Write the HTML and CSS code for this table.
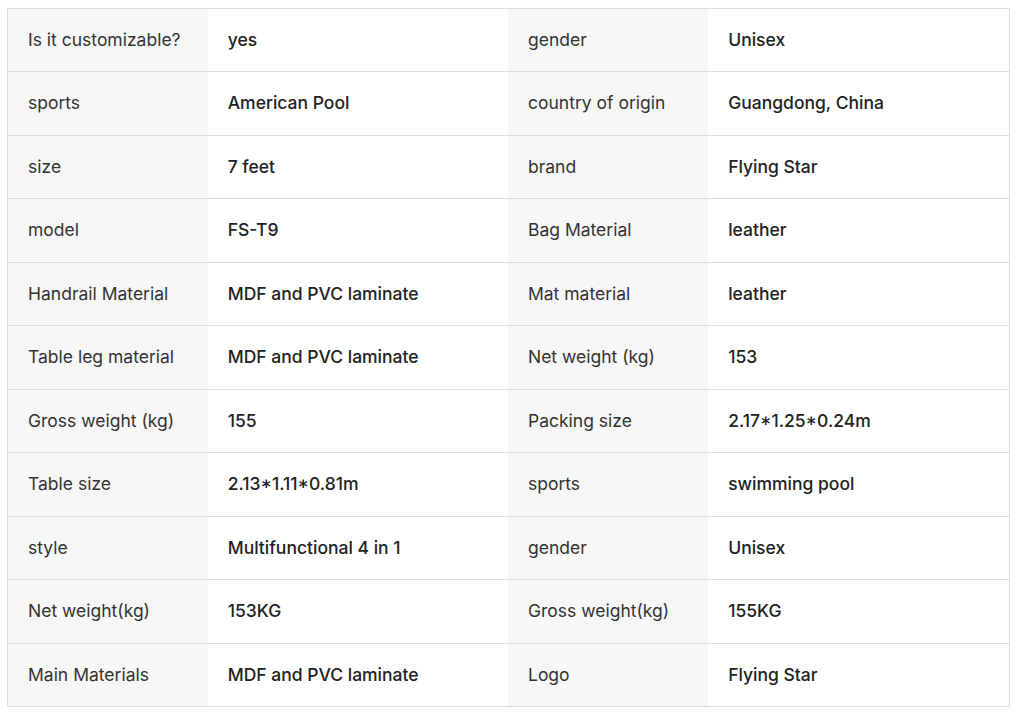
FILE: index.html
```html
<!DOCTYPE html>
<html lang="en">
<head>
<meta charset="utf-8">
<title>Specifications</title>
<link rel="stylesheet" href="styles.css">
</head>
<body>
<div class="wrap">
<table class="spec">
<colgroup><col class="c-label"><col class="c-value"><col class="c-label"><col class="c-value2"></colgroup>
<tbody>
<tr><td class="label">Is it customizable?</td><td class="value">yes</td><td class="label">gender</td><td class="value">Unisex</td></tr>
<tr><td class="label">sports</td><td class="value">American Pool</td><td class="label">country of origin</td><td class="value">Guangdong, China</td></tr>
<tr><td class="label">size</td><td class="value">7 feet</td><td class="label">brand</td><td class="value">Flying Star</td></tr>
<tr><td class="label">model</td><td class="value">FS-T9</td><td class="label">Bag Material</td><td class="value">leather</td></tr>
<tr><td class="label">Handrail Material</td><td class="value">MDF and PVC laminate</td><td class="label">Mat material</td><td class="value">leather</td></tr>
<tr><td class="label">Table leg material</td><td class="value">MDF and PVC laminate</td><td class="label">Net weight (kg)</td><td class="value">153</td></tr>
<tr><td class="label">Gross weight (kg)</td><td class="value">155</td><td class="label">Packing size</td><td class="value">2.17*1.25*0.24m</td></tr>
<tr><td class="label">Table size</td><td class="value">2.13*1.11*0.81m</td><td class="label">sports</td><td class="value">swimming pool</td></tr>
<tr><td class="label">style</td><td class="value">Multifunctional 4 in 1</td><td class="label">gender</td><td class="value">Unisex</td></tr>
<tr><td class="label">Net weight(kg)</td><td class="value">153KG</td><td class="label">Gross weight(kg)</td><td class="value">155KG</td></tr>
<tr><td class="label">Main Materials</td><td class="value">MDF and PVC laminate</td><td class="label">Logo</td><td class="value">Flying Star</td></tr>
</tbody>
</table>
</div>
</body>
</html>
```
FILE: styles.css
```css
html, body {
  margin: 0;
  padding: 0;
  background: #ffffff;
}
.wrap {
  padding: 8px 0 0 7px;
}
.spec {
  border-collapse: collapse;
  width: 1003px;
  table-layout: fixed;
  font-family: Inter, "Noto Sans", sans-serif;
  font-size: 17.5px;
  border: 1px solid #dddddd;
}
.c-label { width: 200px; }
.c-value { width: 300px; }
.c-value2 { width: 301px; }
.spec td {
  border-bottom: 1px solid #dddddd;
  padding: 20px 20px;
  line-height: 22.45px;
  vertical-align: middle;
  white-space: nowrap;
}
.label {
  background: #f7f7f7;
  color: #333333;
  font-weight: 400;
}
.value {
  background: #ffffff;
  color: #222222;
  font-weight: 500;
}
```
